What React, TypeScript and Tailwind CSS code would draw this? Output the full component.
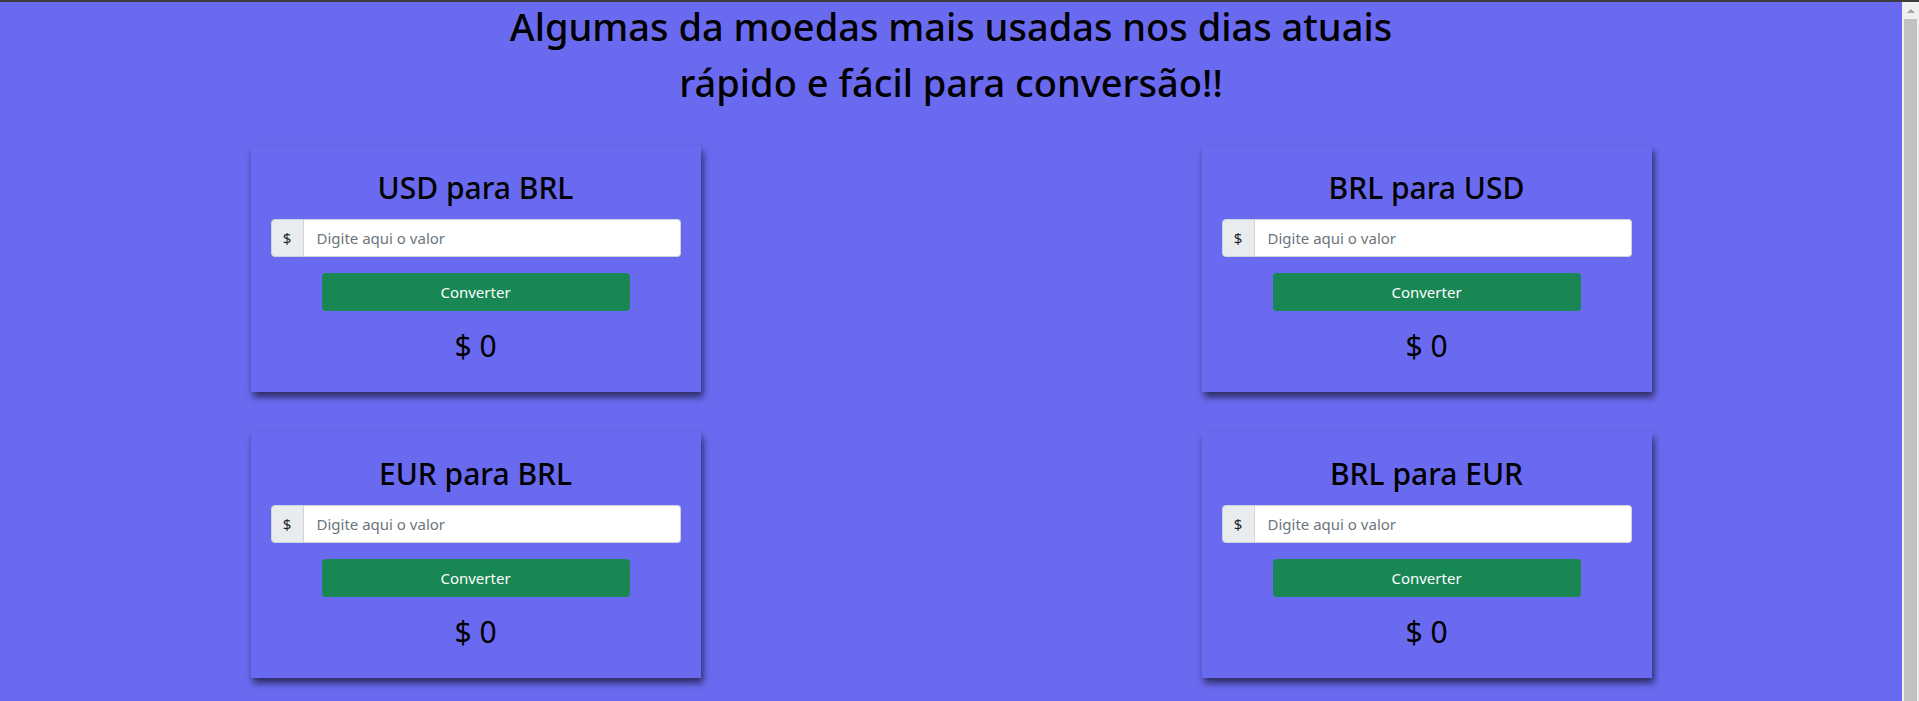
import React from 'react'

const conversoes = [
  { id: 'usd-brl', titulo: 'USD para BRL' },
  { id: 'brl-usd', titulo: 'BRL para USD' },
  { id: 'eur-brl', titulo: 'EUR para BRL' },
  { id: 'brl-eur', titulo: 'BRL para EUR' },
]

function CardConversao({ titulo }: { titulo: string }) {
  return (
    <div className="w-[450px] h-[246px] flex flex-col items-center px-5 pt-5 shadow-[2px_5px_7px_rgba(0,0,0,0.6)]">
      <h2 className="text-[30px] leading-[40px] font-medium text-black mb-[13px] pt-[2px]">{titulo}</h2>

      {/* input group */}
      <div className="flex w-full h-[38px] -mt-[2px]">
        <span className="w-[33px] flex items-center justify-center bg-[#e9ecef] border border-[#ced4da] rounded-l-[4px] text-[15px] text-[#212529]">
          $
        </span>
        <input
          type="text"
          placeholder="Digite aqui o valor"
          className="flex-1 bg-white border border-l-0 border-[#ced4da] rounded-r-[4px] pl-[13px] pr-3 text-[15px] text-[#212529] placeholder:text-[#6c757d] outline-none"
        />
      </div>

      <button className="mt-4 w-[308px] h-[38px] rounded-[4px] bg-[#198754] text-white text-[15px]">
        Converter
      </button>

      <p className="mt-[17px] text-[30px] leading-[36px] font-normal text-black">$ 0</p>
    </div>
  )
}

export default function App() {
  return (
    <div
      className="w-full h-[701px] overflow-hidden flex flex-col bg-[#6a6af0]"
      style={{ fontFamily: '"Noto Sans", "Open Sans", sans-serif' }}
    >
      <div className="h-[2px] bg-[#3c3c3c] shrink-0" />

      <div className="flex flex-1 min-h-0">
        <main className="flex-1 text-center">
          <h1 className="text-[38px] leading-[48px] font-medium text-black mb-2">
            Algumas da moedas mais usadas nos dias atuais
          </h1>
          <h1 className="text-[38px] leading-[48px] font-medium text-black mb-2">
            rápido e fácil para conversão!!
          </h1>

          <div className="grid grid-cols-2 gap-y-10 mt-10">
            {conversoes.map((c) => (
              <div key={c.id} className="flex justify-center">
                <CardConversao titulo={c.titulo} />
              </div>
            ))}
          </div>
        </main>

        {/* barra de rolagem */}
        <div className="w-[17px] shrink-0 bg-[#f0f0f0] flex flex-col">
          <div className="h-[17px] flex items-center justify-center">
            <div className="w-0 h-0 border-l-[4px] border-r-[4px] border-b-[4px] border-l-transparent border-r-transparent border-b-[#a3a3a3]" />
          </div>
          <div className="flex-1 mx-[2px] bg-[#c1c1c1]" />
        </div>
      </div>
    </div>
  )
}
